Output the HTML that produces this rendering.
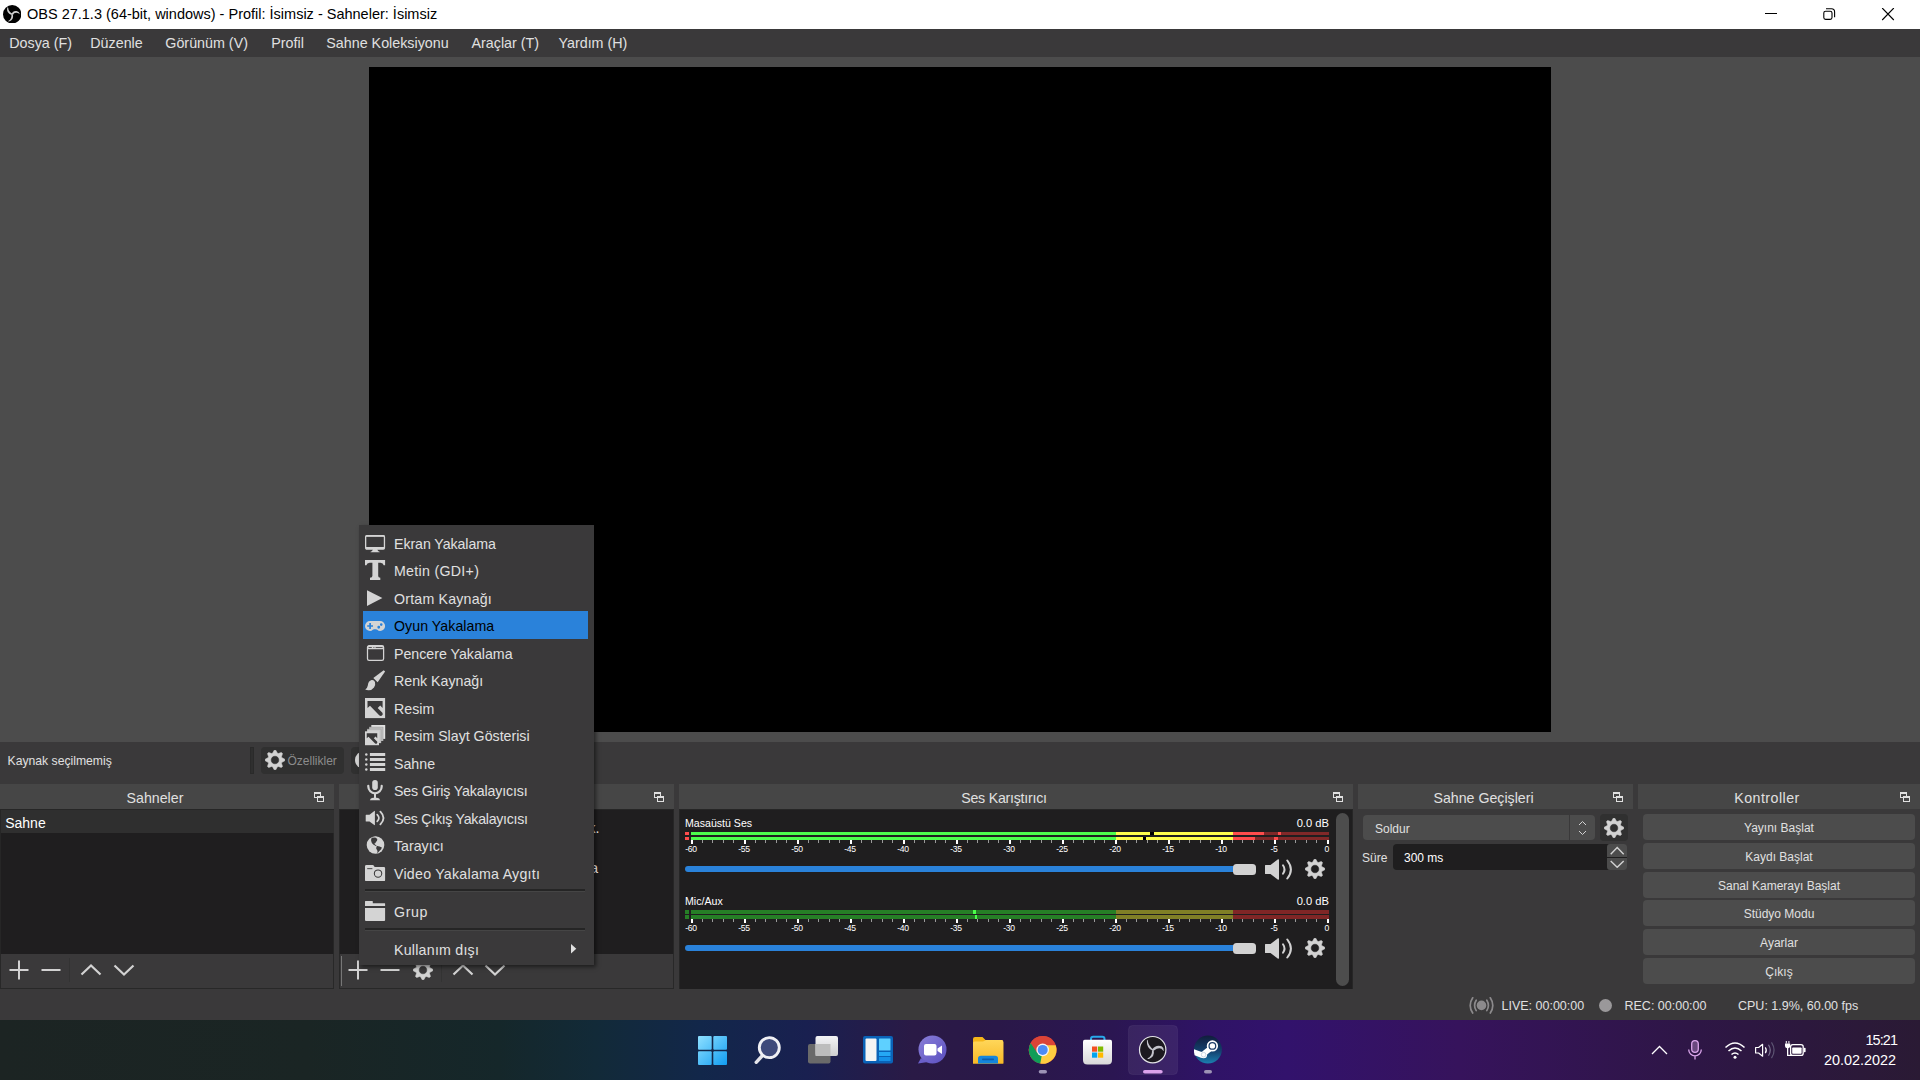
<!DOCTYPE html>
<html lang="tr"><head><meta charset="utf-8"><title>OBS</title>
<style>
*{box-sizing:border-box;margin:0;padding:0}
html,body{width:1920px;height:1080px;overflow:hidden;background:#3a393a;font-family:"Liberation Sans",sans-serif;color:#e0e0e0}
.abs{position:absolute}
div.abs{white-space:nowrap}
#titlebar{left:0;top:0;width:1920px;height:29px;background:#fff;color:#000;font-size:14.5px;line-height:29px}
#menubar{left:0;top:29px;width:1920px;height:28px;background:#3a393a;font-size:14.3px;line-height:28px}
#menubar span{position:absolute;top:0;white-space:nowrap}
#preview{left:0;top:57px;width:1920px;height:685px;background:#4c4c4c}
#canvas{left:369px;top:10px;width:1182px;height:665px;background:#000}
.dh{height:25px;top:784px;background:#464646;font-size:14.2px;line-height:28px;text-align:center}
.list{background:#1f1e1f;top:809px;border:1px solid #262626;border-bottom:none}
.tb{top:954px;height:35px;background:#3a393a;border-bottom:1px solid #282828;border-left:1px solid #282828;border-right:1px solid #282828}
.mx{font-size:10.6px;line-height:14px;color:#fff}
.tk{font-size:8.6px;line-height:9px;color:#fff;letter-spacing:-0.3px}
.btn{left:1643px;width:272px;height:26px;border-radius:4px;background:#4c4c4c;font-size:12px;line-height:26px;padding-top:1px;text-align:center}
.mi{font-size:14.2px;line-height:28px}
#ctx{left:359px;top:525px;width:235px;height:440px;background:#3a393a;box-shadow:2px 2px 4px rgba(0,0,0,.5)}
.st{top:998px;font-size:12.5px;line-height:16px}
#taskbar{left:0;top:1020px;width:1920px;height:60px;background:linear-gradient(90deg,#1c2423 0%,#1a2524 16%,#15272a 26%,#122a38 31%,#12274a 36.500%,#192050 42%,#2a1a46 47.500%,#2a1848 52%,#2b1652 58%,#2f1366 63%,#32126c 67%,#36135c 76%,#2e1646 88%,#2a1a34 100%)}
</style></head><body>
<div id="titlebar" class="abs"><span class="abs" style="left:27px;white-space:nowrap">OBS 27.1.3 (64-bit, windows) - Profil: İsimsiz - Sahneler: İsimsiz</span>
<svg class="abs" style="left:2.9px;top:4.6px" width="18.4" height="18.6" viewBox="0 0 18.4 18.6"><circle cx="9.2" cy="9.3" r="9.2" fill="#020202"/><g fill="#cfcfcf"><path d="M4.2,2.5Q3.1,8 8.5,10.1L9.7,8.8Q5.5,7 5.1,2.6Z"/><path d="M8.6,9Q10,5.500 13.6,6.100Q16.100,6.700 17,9.300Q15.400,7.900 13.400,7.700Q11,7.500 9.900,10Z"/><path d="M8.400,9.600L10,9.600Q10.900,15.400 6,16.500Q5.400,16.500 5.200,16Q8.800,14.600 8.400,9.600Z"/></g></svg>
<svg class="abs" style="left:1760px;top:8px" width="140" height="14" viewBox="0 0 140 14"><path d="M5,5.5H17" stroke="#000" stroke-width="1" fill="none"/><rect x="63.8" y="3.2" width="8.2" height="8.2" rx="1.8" fill="none" stroke="#000" stroke-width="1.1"/><path d="M66,0.8H71.5Q74.6,0.8 74.6,3.9V9.2" fill="none" stroke="#000" stroke-width="1.1"/><path d="M122.2,0L133.8,12M133.8,0L122.2,12" stroke="#000" stroke-width="1.1" fill="none"/></svg>
</div>
<div id="menubar" class="abs">
<span style="left:9.3px">Dosya (F)</span><span style="left:90.3px">Düzenle</span><span style="left:165.3px">Görünüm (V)</span><span style="left:271.3px">Profil</span><span style="left:326.3px">Sahne Koleksiyonu</span><span style="left:471.5px">Araçlar (T)</span><span style="left:558.5px">Yardım (H)</span>
</div>
<div id="preview" class="abs"><div id="canvas" class="abs"></div></div>

<!-- context bar -->
<div class="abs" style="left:7.5px;top:753px;font-size:12.2px;line-height:16px">Kaynak seçilmemiş</div>
<div class="abs" style="left:250px;top:747px;width:4px;height:27px;background:#2f2f2f;border:1px solid #2a2a2a"></div>
<div class="abs" style="left:261px;top:747px;width:83px;height:27px;border-radius:4px;background:#303030"></div>
<svg class="abs" style="left:265px;top:750px" width="20" height="20" viewBox="0 0 24 24"><path fill="#d2d2d2" fill-rule="evenodd" stroke="#d2d2d2" stroke-width="0.7" stroke-linejoin="round" d="M9.31,3.73 L11.07,0.24 L12.93,0.24 L14.69,3.73 L15.95,4.25 L19.66,3.03 L20.97,4.34 L19.75,8.05 L20.27,9.31 L23.76,11.07 L23.76,12.93 L20.27,14.69 L19.75,15.95 L20.97,19.66 L19.66,20.97 L15.95,19.75 L14.69,20.27 L12.93,23.76 L11.07,23.76 L9.31,20.27 L8.05,19.75 L4.34,20.97 L3.03,19.66 L4.25,15.95 L3.73,14.69 L0.24,12.93 L0.24,11.07 L3.73,9.31 L4.25,8.05 L3.03,4.34 L4.34,3.03 L8.05,4.25Z M17.15,12.00 A5.15,5.15 0 1,0 6.85,12.00 A5.15,5.15 0 1,0 17.15,12.00Z"/></svg>
<div class="abs" style="left:287.5px;top:753px;font-size:12px;line-height:16px;color:#8c8c8c">Özellikler</div>
<div class="abs" style="left:351px;top:747px;width:80px;height:27px;border-radius:4px;background:#303030"></div>
<div class="abs" style="left:355px;top:751px;width:18px;height:18px;border-radius:9px;background:#d2d2d2"></div>
<div class="abs" style="left:378px;top:753px;font-size:12px;line-height:16px;color:#8c8c8c">Filtreler</div>

<!-- Scenes dock -->
<div class="abs dh" style="left:0;width:334px"><span style="position:relative;left:-12px">Sahneler</span></div>
<svg class="abs" style="left:314px;top:792px" width="11" height="11" viewBox="0 0 11 11" shape-rendering="crispEdges"><rect x="0.5" y="0.5" width="6" height="5" fill="#464646" stroke="#e0e0e0"/><rect x="0" y="0" width="7" height="2" fill="#e0e0e0"/><rect x="3.5" y="4.5" width="6" height="5" fill="#464646" stroke="#e0e0e0"/><rect x="3" y="4" width="7" height="2" fill="#e0e0e0"/></svg>
<div class="abs list" style="left:0;width:334px;height:145px"></div>
<div class="abs" style="left:1px;top:810px;width:333px;height:23px;background:#2f2f2f"></div>
<div class="abs" style="left:5.2px;top:812px;font-size:14px;line-height:22px;color:#fff">Sahne</div>
<div class="abs tb" style="left:0;width:334px"></div>
<svg class="abs" style="left:9px;top:960px" width="20" height="20" viewBox="0 0 20 20"><path stroke="#d2d2d2" stroke-width="2" fill="none" d="M10,0.5V19.5M0.5,10H19.5"/></svg><svg class="abs" style="left:41px;top:960px" width="20" height="20" viewBox="0 0 20 20"><path stroke="#d2d2d2" stroke-width="2" fill="none" d="M0.5,10H19.5"/></svg><svg class="abs" style="left:80px;top:963px" width="22" height="14" viewBox="0 0 22 14"><path stroke="#d2d2d2" stroke-width="2.2" fill="none" stroke-linejoin="miter" d="M1.5,11.5 L11,2.5 L20.5,11.5"/></svg><svg class="abs" style="left:113px;top:963px" width="22" height="14" viewBox="0 0 22 14"><path stroke="#d2d2d2" stroke-width="2.2" fill="none" stroke-linejoin="miter" d="M1.5,2.5 L11,11.5 L20.5,2.5"/></svg>
<div class="abs" style="left:69px;top:958px;width:1px;height:24px;background:#333"></div>

<!-- Sources dock -->
<div class="abs dh" style="left:339px;width:335px"><span style="position:relative;left:-12px">Kaynaklar</span></div>
<svg class="abs" style="left:654px;top:792px" width="11" height="11" viewBox="0 0 11 11" shape-rendering="crispEdges"><rect x="0.5" y="0.5" width="6" height="5" fill="#464646" stroke="#e0e0e0"/><rect x="0" y="0" width="7" height="2" fill="#e0e0e0"/><rect x="3.5" y="4.5" width="6" height="5" fill="#464646" stroke="#e0e0e0"/><rect x="3" y="4" width="7" height="2" fill="#e0e0e0"/></svg>
<div class="abs list" style="left:339px;width:335px;height:145px"></div>
<div class="abs" style="left:400px;top:820.4px;font-size:14px;line-height:16px;color:#fff;width:199.5px;text-align:right">Hiç kaynağınız yok.</div>
<div class="abs" style="left:400px;top:860.3px;font-size:14px;line-height:16px;color:#fff;width:198px;text-align:right">veya buraya tıklaya</div>
<div class="abs tb" style="left:339px;width:335px"></div>
<div class="abs" style="left:341px;top:956px;width:1px;height:30px;background:#777"></div>
<svg class="abs" style="left:348px;top:960px" width="20" height="20" viewBox="0 0 20 20"><path stroke="#d2d2d2" stroke-width="2" fill="none" d="M10,0.5V19.5M0.5,10H19.5"/></svg><svg class="abs" style="left:380px;top:960px" width="20" height="20" viewBox="0 0 20 20"><path stroke="#d2d2d2" stroke-width="2" fill="none" d="M0.5,10H19.5"/></svg><svg class="abs" style="left:413px;top:960px" width="20" height="20" viewBox="0 0 24 24"><path fill="#d2d2d2" fill-rule="evenodd" stroke="#d2d2d2" stroke-width="0.7" stroke-linejoin="round" d="M9.31,3.73 L11.07,0.24 L12.93,0.24 L14.69,3.73 L15.95,4.25 L19.66,3.03 L20.97,4.34 L19.75,8.05 L20.27,9.31 L23.76,11.07 L23.76,12.93 L20.27,14.69 L19.75,15.95 L20.97,19.66 L19.66,20.97 L15.95,19.75 L14.69,20.27 L12.93,23.76 L11.07,23.76 L9.31,20.27 L8.05,19.75 L4.34,20.97 L3.03,19.66 L4.25,15.95 L3.73,14.69 L0.24,12.93 L0.24,11.07 L3.73,9.31 L4.25,8.05 L3.03,4.34 L4.34,3.03 L8.05,4.25Z M17.15,12.00 A5.15,5.15 0 1,0 6.85,12.00 A5.15,5.15 0 1,0 17.15,12.00Z"/></svg><svg class="abs" style="left:452px;top:963px" width="22" height="14" viewBox="0 0 22 14"><path stroke="#d2d2d2" stroke-width="2.2" fill="none" stroke-linejoin="miter" d="M1.5,11.5 L11,2.5 L20.5,11.5"/></svg><svg class="abs" style="left:484px;top:963px" width="22" height="14" viewBox="0 0 22 14"><path stroke="#d2d2d2" stroke-width="2.2" fill="none" stroke-linejoin="miter" d="M1.5,2.5 L11,11.5 L20.5,2.5"/></svg>
<div class="abs" style="left:441px;top:958px;width:1px;height:24px;background:#333"></div>

<!-- Mixer dock -->
<div class="abs dh" style="left:679px;width:674px"><span style="position:relative;left:-12px;letter-spacing:-0.24px">Ses Karıştırıcı</span></div>
<svg class="abs" style="left:1333px;top:792px" width="11" height="11" viewBox="0 0 11 11" shape-rendering="crispEdges"><rect x="0.5" y="0.5" width="6" height="5" fill="#464646" stroke="#e0e0e0"/><rect x="0" y="0" width="7" height="2" fill="#e0e0e0"/><rect x="3.5" y="4.5" width="6" height="5" fill="#464646" stroke="#e0e0e0"/><rect x="3" y="4" width="7" height="2" fill="#e0e0e0"/></svg>
<div class="abs list" style="left:679px;width:674px;height:180px"></div>
<div class="abs mx" style="left:685px;top:816px">Masaüstü Ses</div><div class="abs mx" style="left:1260px;width:69px;text-align:right;top:816px;font-size:11.2px">0.0 dB</div><div class="abs" style="left:685px;top:832px;width:4px;height:3px;background:#ff4c4c"></div><div class="abs" style="left:691px;top:832px;width:425px;height:3px;background:#4cff4c"></div><div class="abs" style="left:1116px;top:832px;width:117px;height:3px;background:#ffff4c"></div><div class="abs" style="left:1233px;top:832px;width:31px;height:3px;background:#ff4c4c"></div><div class="abs" style="left:1264px;top:832px;width:65px;height:3px;background:#802828"></div><div class="abs" style="left:1278px;top:832px;width:3px;height:3px;background:#ff4c4c"></div><div class="abs" style="left:1150px;top:832px;width:4px;height:3px;background:#000"></div><div class="abs" style="left:685px;top:837px;width:4px;height:3px;background:#ff4c4c"></div><div class="abs" style="left:691px;top:837px;width:425px;height:3px;background:#4cff4c"></div><div class="abs" style="left:1116px;top:837px;width:117px;height:3px;background:#ffff4c"></div><div class="abs" style="left:1233px;top:837px;width:22px;height:3px;background:#ff4c4c"></div><div class="abs" style="left:1255px;top:837px;width:74px;height:3px;background:#802828"></div><div class="abs" style="left:1274px;top:837px;width:4px;height:3px;background:#ff4c4c"></div><div class="abs" style="left:1143px;top:837px;width:3px;height:3px;background:#000"></div><div class="abs" style="left:691px;top:840px;width:2px;height:4px;background:#fff"></div><div class="abs tk" style="left:671px;top:845px;width:40px;text-align:center">-60</div><div class="abs" style="left:702px;top:840px;width:1px;height:3px;background:#9a9a9a"></div><div class="abs" style="left:712px;top:840px;width:1px;height:3px;background:#9a9a9a"></div><div class="abs" style="left:723px;top:840px;width:1px;height:3px;background:#9a9a9a"></div><div class="abs" style="left:733px;top:840px;width:1px;height:3px;background:#9a9a9a"></div><div class="abs" style="left:744px;top:840px;width:2px;height:4px;background:#fff"></div><div class="abs tk" style="left:724px;top:845px;width:40px;text-align:center">-55</div><div class="abs" style="left:755px;top:840px;width:1px;height:3px;background:#9a9a9a"></div><div class="abs" style="left:765px;top:840px;width:1px;height:3px;background:#9a9a9a"></div><div class="abs" style="left:776px;top:840px;width:1px;height:3px;background:#9a9a9a"></div><div class="abs" style="left:786px;top:840px;width:1px;height:3px;background:#9a9a9a"></div><div class="abs" style="left:797px;top:840px;width:2px;height:4px;background:#fff"></div><div class="abs tk" style="left:777px;top:845px;width:40px;text-align:center">-50</div><div class="abs" style="left:808px;top:840px;width:1px;height:3px;background:#9a9a9a"></div><div class="abs" style="left:818px;top:840px;width:1px;height:3px;background:#9a9a9a"></div><div class="abs" style="left:829px;top:840px;width:1px;height:3px;background:#9a9a9a"></div><div class="abs" style="left:839px;top:840px;width:1px;height:3px;background:#9a9a9a"></div><div class="abs" style="left:850px;top:840px;width:2px;height:4px;background:#fff"></div><div class="abs tk" style="left:830px;top:845px;width:40px;text-align:center">-45</div><div class="abs" style="left:861px;top:840px;width:1px;height:3px;background:#9a9a9a"></div><div class="abs" style="left:871px;top:840px;width:1px;height:3px;background:#9a9a9a"></div><div class="abs" style="left:882px;top:840px;width:1px;height:3px;background:#9a9a9a"></div><div class="abs" style="left:892px;top:840px;width:1px;height:3px;background:#9a9a9a"></div><div class="abs" style="left:903px;top:840px;width:2px;height:4px;background:#fff"></div><div class="abs tk" style="left:883px;top:845px;width:40px;text-align:center">-40</div><div class="abs" style="left:914px;top:840px;width:1px;height:3px;background:#9a9a9a"></div><div class="abs" style="left:924px;top:840px;width:1px;height:3px;background:#9a9a9a"></div><div class="abs" style="left:935px;top:840px;width:1px;height:3px;background:#9a9a9a"></div><div class="abs" style="left:945px;top:840px;width:1px;height:3px;background:#9a9a9a"></div><div class="abs" style="left:956px;top:840px;width:2px;height:4px;background:#fff"></div><div class="abs tk" style="left:936px;top:845px;width:40px;text-align:center">-35</div><div class="abs" style="left:967px;top:840px;width:1px;height:3px;background:#9a9a9a"></div><div class="abs" style="left:977px;top:840px;width:1px;height:3px;background:#9a9a9a"></div><div class="abs" style="left:988px;top:840px;width:1px;height:3px;background:#9a9a9a"></div><div class="abs" style="left:998px;top:840px;width:1px;height:3px;background:#9a9a9a"></div><div class="abs" style="left:1009px;top:840px;width:2px;height:4px;background:#fff"></div><div class="abs tk" style="left:989px;top:845px;width:40px;text-align:center">-30</div><div class="abs" style="left:1020px;top:840px;width:1px;height:3px;background:#9a9a9a"></div><div class="abs" style="left:1030px;top:840px;width:1px;height:3px;background:#9a9a9a"></div><div class="abs" style="left:1041px;top:840px;width:1px;height:3px;background:#9a9a9a"></div><div class="abs" style="left:1051px;top:840px;width:1px;height:3px;background:#9a9a9a"></div><div class="abs" style="left:1062px;top:840px;width:2px;height:4px;background:#fff"></div><div class="abs tk" style="left:1042px;top:845px;width:40px;text-align:center">-25</div><div class="abs" style="left:1073px;top:840px;width:1px;height:3px;background:#9a9a9a"></div><div class="abs" style="left:1083px;top:840px;width:1px;height:3px;background:#9a9a9a"></div><div class="abs" style="left:1094px;top:840px;width:1px;height:3px;background:#9a9a9a"></div><div class="abs" style="left:1104px;top:840px;width:1px;height:3px;background:#9a9a9a"></div><div class="abs" style="left:1115px;top:840px;width:2px;height:4px;background:#fff"></div><div class="abs tk" style="left:1095px;top:845px;width:40px;text-align:center">-20</div><div class="abs" style="left:1126px;top:840px;width:1px;height:3px;background:#9a9a9a"></div><div class="abs" style="left:1136px;top:840px;width:1px;height:3px;background:#9a9a9a"></div><div class="abs" style="left:1147px;top:840px;width:1px;height:3px;background:#9a9a9a"></div><div class="abs" style="left:1157px;top:840px;width:1px;height:3px;background:#9a9a9a"></div><div class="abs" style="left:1168px;top:840px;width:2px;height:4px;background:#fff"></div><div class="abs tk" style="left:1148px;top:845px;width:40px;text-align:center">-15</div><div class="abs" style="left:1179px;top:840px;width:1px;height:3px;background:#9a9a9a"></div><div class="abs" style="left:1189px;top:840px;width:1px;height:3px;background:#9a9a9a"></div><div class="abs" style="left:1200px;top:840px;width:1px;height:3px;background:#9a9a9a"></div><div class="abs" style="left:1210px;top:840px;width:1px;height:3px;background:#9a9a9a"></div><div class="abs" style="left:1221px;top:840px;width:2px;height:4px;background:#fff"></div><div class="abs tk" style="left:1201px;top:845px;width:40px;text-align:center">-10</div><div class="abs" style="left:1232px;top:840px;width:1px;height:3px;background:#9a9a9a"></div><div class="abs" style="left:1242px;top:840px;width:1px;height:3px;background:#9a9a9a"></div><div class="abs" style="left:1253px;top:840px;width:1px;height:3px;background:#9a9a9a"></div><div class="abs" style="left:1263px;top:840px;width:1px;height:3px;background:#9a9a9a"></div><div class="abs" style="left:1274px;top:840px;width:2px;height:4px;background:#fff"></div><div class="abs tk" style="left:1254px;top:845px;width:40px;text-align:center">-5</div><div class="abs" style="left:1285px;top:840px;width:1px;height:3px;background:#9a9a9a"></div><div class="abs" style="left:1295px;top:840px;width:1px;height:3px;background:#9a9a9a"></div><div class="abs" style="left:1306px;top:840px;width:1px;height:3px;background:#9a9a9a"></div><div class="abs" style="left:1316px;top:840px;width:1px;height:3px;background:#9a9a9a"></div><div class="abs" style="left:1327px;top:840px;width:2px;height:4px;background:#fff"></div><div class="abs tk" style="left:1299px;top:845px;width:30px;text-align:right">0</div><div class="abs" style="left:685px;top:866px;width:560px;height:6px;border-radius:3px;background:#2a82da"></div><div class="abs" style="left:1233px;top:864px;width:23px;height:11px;border-radius:3.5px;background:#d2d2d2"></div><svg class="abs" style="left:1265px;top:859px" width="28" height="21" viewBox="0 0 28 21"><path fill="#d2d2d2" d="M0.5,6 H5.5 L13,0.3 Q14,0 14,1 V20 Q14,21 13,20.7 L5.5,15 H0.5 Q0,15 0,14.5 V6.5 Q0,6 0.5,6Z"/><path fill="none" stroke="#d2d2d2" stroke-width="2" stroke-linecap="round" d="M18,6.2 Q21,10.5 18,14.8"/><path fill="none" stroke="#d2d2d2" stroke-width="2" stroke-linecap="round" d="M22.3,1.5 Q29.5,10.5 22.3,19.5"/></svg><svg class="abs" style="left:1305px;top:859px" width="20" height="20" viewBox="0 0 24 24"><path fill="#d2d2d2" fill-rule="evenodd" stroke="#d2d2d2" stroke-width="0.7" stroke-linejoin="round" d="M9.31,3.73 L11.07,0.24 L12.93,0.24 L14.69,3.73 L15.95,4.25 L19.66,3.03 L20.97,4.34 L19.75,8.05 L20.27,9.31 L23.76,11.07 L23.76,12.93 L20.27,14.69 L19.75,15.95 L20.97,19.66 L19.66,20.97 L15.95,19.75 L14.69,20.27 L12.93,23.76 L11.07,23.76 L9.31,20.27 L8.05,19.75 L4.34,20.97 L3.03,19.66 L4.25,15.95 L3.73,14.69 L0.24,12.93 L0.24,11.07 L3.73,9.31 L4.25,8.05 L3.03,4.34 L4.34,3.03 L8.05,4.25Z M17.15,12.00 A5.15,5.15 0 1,0 6.85,12.00 A5.15,5.15 0 1,0 17.15,12.00Z"/></svg>
<div class="abs mx" style="left:685px;top:894px">Mic/Aux</div><div class="abs mx" style="left:1260px;width:69px;text-align:right;top:894px;font-size:11.2px">0.0 dB</div><div class="abs" style="left:685px;top:910px;width:4px;height:4px;background:#267f26"></div><div class="abs" style="left:691px;top:910px;width:425px;height:4px;background:#267f26"></div><div class="abs" style="left:1116px;top:910px;width:117px;height:4px;background:#7f7f26"></div><div class="abs" style="left:1233px;top:910px;width:96px;height:4px;background:#7f2626"></div><div class="abs" style="left:973px;top:910px;width:3px;height:4px;background:#4cff4c"></div><div class="abs" style="left:685px;top:915px;width:4px;height:4px;background:#267f26"></div><div class="abs" style="left:691px;top:915px;width:425px;height:4px;background:#267f26"></div><div class="abs" style="left:1116px;top:915px;width:117px;height:4px;background:#7f7f26"></div><div class="abs" style="left:1233px;top:915px;width:96px;height:4px;background:#7f2626"></div><div class="abs" style="left:975px;top:915px;width:2px;height:4px;background:#4cff4c"></div><div class="abs" style="left:691px;top:919px;width:2px;height:4px;background:#fff"></div><div class="abs tk" style="left:671px;top:924px;width:40px;text-align:center">-60</div><div class="abs" style="left:702px;top:919px;width:1px;height:3px;background:#9a9a9a"></div><div class="abs" style="left:712px;top:919px;width:1px;height:3px;background:#9a9a9a"></div><div class="abs" style="left:723px;top:919px;width:1px;height:3px;background:#9a9a9a"></div><div class="abs" style="left:733px;top:919px;width:1px;height:3px;background:#9a9a9a"></div><div class="abs" style="left:744px;top:919px;width:2px;height:4px;background:#fff"></div><div class="abs tk" style="left:724px;top:924px;width:40px;text-align:center">-55</div><div class="abs" style="left:755px;top:919px;width:1px;height:3px;background:#9a9a9a"></div><div class="abs" style="left:765px;top:919px;width:1px;height:3px;background:#9a9a9a"></div><div class="abs" style="left:776px;top:919px;width:1px;height:3px;background:#9a9a9a"></div><div class="abs" style="left:786px;top:919px;width:1px;height:3px;background:#9a9a9a"></div><div class="abs" style="left:797px;top:919px;width:2px;height:4px;background:#fff"></div><div class="abs tk" style="left:777px;top:924px;width:40px;text-align:center">-50</div><div class="abs" style="left:808px;top:919px;width:1px;height:3px;background:#9a9a9a"></div><div class="abs" style="left:818px;top:919px;width:1px;height:3px;background:#9a9a9a"></div><div class="abs" style="left:829px;top:919px;width:1px;height:3px;background:#9a9a9a"></div><div class="abs" style="left:839px;top:919px;width:1px;height:3px;background:#9a9a9a"></div><div class="abs" style="left:850px;top:919px;width:2px;height:4px;background:#fff"></div><div class="abs tk" style="left:830px;top:924px;width:40px;text-align:center">-45</div><div class="abs" style="left:861px;top:919px;width:1px;height:3px;background:#9a9a9a"></div><div class="abs" style="left:871px;top:919px;width:1px;height:3px;background:#9a9a9a"></div><div class="abs" style="left:882px;top:919px;width:1px;height:3px;background:#9a9a9a"></div><div class="abs" style="left:892px;top:919px;width:1px;height:3px;background:#9a9a9a"></div><div class="abs" style="left:903px;top:919px;width:2px;height:4px;background:#fff"></div><div class="abs tk" style="left:883px;top:924px;width:40px;text-align:center">-40</div><div class="abs" style="left:914px;top:919px;width:1px;height:3px;background:#9a9a9a"></div><div class="abs" style="left:924px;top:919px;width:1px;height:3px;background:#9a9a9a"></div><div class="abs" style="left:935px;top:919px;width:1px;height:3px;background:#9a9a9a"></div><div class="abs" style="left:945px;top:919px;width:1px;height:3px;background:#9a9a9a"></div><div class="abs" style="left:956px;top:919px;width:2px;height:4px;background:#fff"></div><div class="abs tk" style="left:936px;top:924px;width:40px;text-align:center">-35</div><div class="abs" style="left:967px;top:919px;width:1px;height:3px;background:#9a9a9a"></div><div class="abs" style="left:977px;top:919px;width:1px;height:3px;background:#9a9a9a"></div><div class="abs" style="left:988px;top:919px;width:1px;height:3px;background:#9a9a9a"></div><div class="abs" style="left:998px;top:919px;width:1px;height:3px;background:#9a9a9a"></div><div class="abs" style="left:1009px;top:919px;width:2px;height:4px;background:#fff"></div><div class="abs tk" style="left:989px;top:924px;width:40px;text-align:center">-30</div><div class="abs" style="left:1020px;top:919px;width:1px;height:3px;background:#9a9a9a"></div><div class="abs" style="left:1030px;top:919px;width:1px;height:3px;background:#9a9a9a"></div><div class="abs" style="left:1041px;top:919px;width:1px;height:3px;background:#9a9a9a"></div><div class="abs" style="left:1051px;top:919px;width:1px;height:3px;background:#9a9a9a"></div><div class="abs" style="left:1062px;top:919px;width:2px;height:4px;background:#fff"></div><div class="abs tk" style="left:1042px;top:924px;width:40px;text-align:center">-25</div><div class="abs" style="left:1073px;top:919px;width:1px;height:3px;background:#9a9a9a"></div><div class="abs" style="left:1083px;top:919px;width:1px;height:3px;background:#9a9a9a"></div><div class="abs" style="left:1094px;top:919px;width:1px;height:3px;background:#9a9a9a"></div><div class="abs" style="left:1104px;top:919px;width:1px;height:3px;background:#9a9a9a"></div><div class="abs" style="left:1115px;top:919px;width:2px;height:4px;background:#fff"></div><div class="abs tk" style="left:1095px;top:924px;width:40px;text-align:center">-20</div><div class="abs" style="left:1126px;top:919px;width:1px;height:3px;background:#9a9a9a"></div><div class="abs" style="left:1136px;top:919px;width:1px;height:3px;background:#9a9a9a"></div><div class="abs" style="left:1147px;top:919px;width:1px;height:3px;background:#9a9a9a"></div><div class="abs" style="left:1157px;top:919px;width:1px;height:3px;background:#9a9a9a"></div><div class="abs" style="left:1168px;top:919px;width:2px;height:4px;background:#fff"></div><div class="abs tk" style="left:1148px;top:924px;width:40px;text-align:center">-15</div><div class="abs" style="left:1179px;top:919px;width:1px;height:3px;background:#9a9a9a"></div><div class="abs" style="left:1189px;top:919px;width:1px;height:3px;background:#9a9a9a"></div><div class="abs" style="left:1200px;top:919px;width:1px;height:3px;background:#9a9a9a"></div><div class="abs" style="left:1210px;top:919px;width:1px;height:3px;background:#9a9a9a"></div><div class="abs" style="left:1221px;top:919px;width:2px;height:4px;background:#fff"></div><div class="abs tk" style="left:1201px;top:924px;width:40px;text-align:center">-10</div><div class="abs" style="left:1232px;top:919px;width:1px;height:3px;background:#9a9a9a"></div><div class="abs" style="left:1242px;top:919px;width:1px;height:3px;background:#9a9a9a"></div><div class="abs" style="left:1253px;top:919px;width:1px;height:3px;background:#9a9a9a"></div><div class="abs" style="left:1263px;top:919px;width:1px;height:3px;background:#9a9a9a"></div><div class="abs" style="left:1274px;top:919px;width:2px;height:4px;background:#fff"></div><div class="abs tk" style="left:1254px;top:924px;width:40px;text-align:center">-5</div><div class="abs" style="left:1285px;top:919px;width:1px;height:3px;background:#9a9a9a"></div><div class="abs" style="left:1295px;top:919px;width:1px;height:3px;background:#9a9a9a"></div><div class="abs" style="left:1306px;top:919px;width:1px;height:3px;background:#9a9a9a"></div><div class="abs" style="left:1316px;top:919px;width:1px;height:3px;background:#9a9a9a"></div><div class="abs" style="left:1327px;top:919px;width:2px;height:4px;background:#fff"></div><div class="abs tk" style="left:1299px;top:924px;width:30px;text-align:right">0</div><div class="abs" style="left:685px;top:945px;width:560px;height:6px;border-radius:3px;background:#2a82da"></div><div class="abs" style="left:1233px;top:943px;width:23px;height:11px;border-radius:3.5px;background:#d2d2d2"></div><svg class="abs" style="left:1265px;top:938px" width="28" height="21" viewBox="0 0 28 21"><path fill="#d2d2d2" d="M0.5,6 H5.5 L13,0.3 Q14,0 14,1 V20 Q14,21 13,20.7 L5.5,15 H0.5 Q0,15 0,14.5 V6.5 Q0,6 0.5,6Z"/><path fill="none" stroke="#d2d2d2" stroke-width="2" stroke-linecap="round" d="M18,6.2 Q21,10.5 18,14.8"/><path fill="none" stroke="#d2d2d2" stroke-width="2" stroke-linecap="round" d="M22.3,1.5 Q29.5,10.5 22.3,19.5"/></svg><svg class="abs" style="left:1305px;top:938px" width="20" height="20" viewBox="0 0 24 24"><path fill="#d2d2d2" fill-rule="evenodd" stroke="#d2d2d2" stroke-width="0.7" stroke-linejoin="round" d="M9.31,3.73 L11.07,0.24 L12.93,0.24 L14.69,3.73 L15.95,4.25 L19.66,3.03 L20.97,4.34 L19.75,8.05 L20.27,9.31 L23.76,11.07 L23.76,12.93 L20.27,14.69 L19.75,15.95 L20.97,19.66 L19.66,20.97 L15.95,19.75 L14.69,20.27 L12.93,23.76 L11.07,23.76 L9.31,20.27 L8.05,19.75 L4.34,20.97 L3.03,19.66 L4.25,15.95 L3.73,14.69 L0.24,12.93 L0.24,11.07 L3.73,9.31 L4.25,8.05 L3.03,4.34 L4.34,3.03 L8.05,4.25Z M17.15,12.00 A5.15,5.15 0 1,0 6.85,12.00 A5.15,5.15 0 1,0 17.15,12.00Z"/></svg>
<div class="abs" style="left:1336px;top:812.7px;width:13px;height:173px;border-radius:6.5px;background:#4d4d4d"></div>

<!-- Transitions dock -->
<div class="abs dh" style="left:1358px;width:275px"><span style="position:relative;left:-12px">Sahne Geçişleri</span></div>
<svg class="abs" style="left:1613px;top:792px" width="11" height="11" viewBox="0 0 11 11" shape-rendering="crispEdges"><rect x="0.5" y="0.5" width="6" height="5" fill="#464646" stroke="#e0e0e0"/><rect x="0" y="0" width="7" height="2" fill="#e0e0e0"/><rect x="3.5" y="4.5" width="6" height="5" fill="#464646" stroke="#e0e0e0"/><rect x="3" y="4" width="7" height="2" fill="#e0e0e0"/></svg>
<div class="abs" style="left:1363px;top:815px;width:232px;height:25px;border-radius:4px;background:#4c4c4c"></div>
<div class="abs" style="left:1569px;top:815px;width:1px;height:25px;background:#3a393a"></div>
<div class="abs" style="left:1375px;top:821px;font-size:12px;line-height:16px">Soldur</div>
<svg class="abs" style="left:1578px;top:820px" width="9" height="16" viewBox="0 0 9 16"><path fill="none" stroke="#d2d2d2" stroke-width="1" d="M1,5L4.5,1.5L8,5M1,11L4.5,14.5L8,11"/></svg>
<div class="abs" style="left:1600px;top:814px;width:28px;height:27px;border-radius:4px;background:#303030"></div>
<svg class="abs" style="left:1604px;top:818px" width="20" height="20" viewBox="0 0 24 24"><path fill="#d2d2d2" fill-rule="evenodd" stroke="#d2d2d2" stroke-width="0.7" stroke-linejoin="round" d="M9.31,3.73 L11.07,0.24 L12.93,0.24 L14.69,3.73 L15.95,4.25 L19.66,3.03 L20.97,4.34 L19.75,8.05 L20.27,9.31 L23.76,11.07 L23.76,12.93 L20.27,14.69 L19.75,15.95 L20.97,19.66 L19.66,20.97 L15.95,19.75 L14.69,20.27 L12.93,23.76 L11.07,23.76 L9.31,20.27 L8.05,19.75 L4.34,20.97 L3.03,19.66 L4.25,15.95 L3.73,14.69 L0.24,12.93 L0.24,11.07 L3.73,9.31 L4.25,8.05 L3.03,4.34 L4.34,3.03 L8.05,4.25Z M17.15,12.00 A5.15,5.15 0 1,0 6.85,12.00 A5.15,5.15 0 1,0 17.15,12.00Z"/></svg>
<div class="abs" style="left:1362px;top:850px;font-size:12px;line-height:16px">Süre</div>
<div class="abs" style="left:1393px;top:844px;width:234px;height:26px;border-radius:4px;background:#1f1e1f"></div>
<div class="abs" style="left:1404px;top:850px;font-size:12px;line-height:16px;color:#fff">300 ms</div>
<div class="abs" style="left:1607px;top:844px;width:20px;height:13px;border-radius:3px 3px 0 0;background:#4c4c4c"></div>
<div class="abs" style="left:1607px;top:858px;width:20px;height:12px;border-radius:0 0 3px 3px;background:#4c4c4c"></div>
<svg class="abs" style="left:1609px;top:846px" width="16" height="22" viewBox="0 0 16 22"><path fill="none" stroke="#d2d2d2" stroke-width="1.4" d="M1.7,8.2L8.2,1.6L14.7,8.2M1.7,15L8.2,21.3L14.7,15"/></svg>

<!-- Controls dock -->
<div class="abs dh" style="left:1638px;width:282px"><span style="position:relative;left:-12px;letter-spacing:0.49px">Kontroller</span></div>
<svg class="abs" style="left:1900px;top:792px" width="11" height="11" viewBox="0 0 11 11" shape-rendering="crispEdges"><rect x="0.5" y="0.5" width="6" height="5" fill="#464646" stroke="#e0e0e0"/><rect x="0" y="0" width="7" height="2" fill="#e0e0e0"/><rect x="3.5" y="4.5" width="6" height="5" fill="#464646" stroke="#e0e0e0"/><rect x="3" y="4" width="7" height="2" fill="#e0e0e0"/></svg>
<div class="abs btn" style="top:814px">Yayını Başlat</div>
<div class="abs btn" style="top:843px">Kaydı Başlat</div>
<div class="abs btn" style="top:872px">Sanal Kamerayı Başlat</div>
<div class="abs btn" style="top:900px">Stüdyo Modu</div>
<div class="abs btn" style="top:929px">Ayarlar</div>
<div class="abs btn" style="top:958px">Çıkış</div>

<!-- status bar -->
<svg class="abs" style="left:1468px;top:996px" width="27" height="19" viewBox="0 0 27 19"><circle cx="13.5" cy="9.4" r="4.8" fill="#8c8a8c"/><path fill="none" stroke="#8c8a8c" stroke-width="1.7" stroke-linecap="round" d="M8.2,4.2Q5,9.4 8.2,14.6M18.8,4.2Q22,9.4 18.8,14.600M4.700,1.800Q-0.300,9.400 4.700,17M22.300,1.800Q27.300,9.400 22.300,17"/></svg>
<div class="abs st" style="left:1501.5px">LIVE: 00:00:00</div>
<div class="abs" style="left:1598.8px;top:998.8px;width:13.2px;height:13.2px;border-radius:7px;background:#9a989a"></div>
<div class="abs st" style="left:1624.5px">REC: 00:00:00</div>
<div class="abs st" style="left:1738px">CPU: 1.9%, 60.00 fps</div>

<div id="ctx" class="abs"><svg class="abs" style="left:6px;top:10px" width="21" height="18" viewBox="0 0 21 18"><rect x="0.65" y="0.75" width="18.8" height="13.3" rx="1.2" fill="none" stroke="#d4d4d4" stroke-width="1.3"/><rect x="0.65" y="12" width="18.8" height="2.1" fill="#d4d4d4"/><rect x="0.4" y="0.3" width="19.3" height="1.4" rx="0.7" fill="#d4d4d4"/><path fill="#d4d4d4" d="M8,14H12.2L12.8,15.6Q13.2,16.4 14.6,16.7Q15,17.3 14.2,17.3H6Q5.2,17.3 5.6,16.7Q7,16.4 7.4,15.6Z"/></svg><div class="abs mi" style="left:35px;top:5px;color:#e0e0e0;letter-spacing:-0.07px">Ekran Yakalama</div><svg class="abs" style="left:6px;top:35px" width="21" height="21" viewBox="0 0 21 21"><path fill="#d4d4d4" d="M0,0H20.1V5.3H18.7Q18.2,2.7 15.5,2.7H13.2V16Q13.2,17.6 15.3,17.7V20.1H5V17.7Q7.4,17.6 7.4,16V2.7H4.6Q1.9,2.7 1.4,5.3H0Z"/></svg><div class="abs mi" style="left:35px;top:32px;color:#e0e0e0;letter-spacing:0.3px">Metin (GDI+)</div><svg class="abs" style="left:6px;top:63px" width="21" height="21" viewBox="0 0 21 21"><path fill="#d4d4d4" d="M2,2.3L17.4,10L2,17.9Z"/></svg><div class="abs mi" style="left:35px;top:60px;color:#e0e0e0;letter-spacing:0.2px">Ortam Kaynağı</div><div class="abs" style="left:4px;top:86px;width:225px;height:28px;background:#2a82da"></div><svg class="abs" style="left:6px;top:91px" width="21" height="21" viewBox="0 0 21 21"><path fill="#d4d4d4" fill-rule="evenodd" d="M5,5H15.1A5,5.05 0 0 1 15.1,15.1Q13.4,15.1 12.3,13.8Q11.8,13.3 11,13.3H9.1Q8.3,13.3 7.8,13.8Q6.7,15.1 5,15.1A5,5.05 0 0 1 5,5Z M4.25,7.1V9.15H2.2V10.85H4.25V12.9H5.95V10.85H8V9.15H5.95V7.1Z M16.25,7.3A1.3,1.3 0 1 0 16.25,9.9A1.3,1.3 0 1 0 16.25,7.3Z M13.75,9.85A1.4,1.4 0 1 0 13.75,12.65A1.4,1.4 0 1 0 13.75,9.85Z"/></svg><div class="abs mi" style="left:35px;top:87px;color:#000;letter-spacing:0.05px">Oyun Yakalama</div><svg class="abs" style="left:6px;top:118px" width="21" height="21" viewBox="0 0 21 21"><rect x="2.5" y="2.7" width="16.1" height="14.7" rx="1.6" fill="none" stroke="#d4d4d4" stroke-width="1.25"/><rect x="2.5" y="2.7" width="16.1" height="3.6" rx="1" fill="#d4d4d4"/><path d="M3.6,4.5H6.8M8.4,4.5H9.4M10.6,4.5H17.6" stroke="#3a393a" stroke-width="0.9" fill="none" opacity="0.9"/></svg><div class="abs mi" style="left:35px;top:115px;color:#e0e0e0;letter-spacing:0px">Pencere Yakalama</div><svg class="abs" style="left:6px;top:145px" width="21" height="21" viewBox="0 0 21 21"><path fill="#d4d4d4" d="M18.7,0.2L20.1,1.6L12.6,12.3L8.3,7.9Z"/><path fill="#d4d4d4" d="M6.6,10Q9,9.6 10,12Q10.8,15 9,17.5Q7,20.3 3.5,20.2Q1.5,20.2 0.2,19.6Q2.5,18 2.8,15.5Q3.2,10.8 6.6,10Z"/></svg><div class="abs mi" style="left:35px;top:142px;color:#e0e0e0;letter-spacing:0px">Renk Kaynağı</div><svg class="abs" style="left:6px;top:173px" width="21" height="21" viewBox="0 0 21 21"><rect x="0" y="0" width="20.1" height="20.1" fill="#d4d4d4"/><path fill="#3a393a" d="M2.5,2.9H17.6V9.9L15.2,7.6L12.7,10.1L17.4,14.8Q18.4,16.6 17,17.6Q15.6,18.4 14.2,17.2L5,7.7L2.5,9.9Z"/></svg><div class="abs mi" style="left:35px;top:170px;color:#e0e0e0;letter-spacing:0px">Resim</div><svg class="abs" style="left:6px;top:200px" width="21" height="21" viewBox="0 0 21 21"><rect x="6.3" y="0" width="13.9" height="13.9" fill="#e0e0e0"/><rect x="4.2" y="2.1" width="13.9" height="13.9" fill="#bdbdbd"/><rect x="2.1" y="4.2" width="13.9" height="13.9" fill="#cccccc"/><path d="M4.2,2.1H18.1V16M2.1,4.2H16V18.1" fill="none" stroke="#9a9a9a" stroke-width="0.5"/><rect x="0" y="6.3" width="14" height="13.9" fill="#d4d4d4"/><path fill="#3a393a" transform="translate(0,6.3) scale(0.695)" d="M2.5,2.9H17.6V9.9L15.2,7.6L12.7,10.1L17.4,14.8Q18.4,16.6 17,17.6Q15.6,18.4 14.2,17.2L5,7.7L2.5,9.9Z"/></svg><div class="abs mi" style="left:35px;top:197px;color:#e0e0e0;letter-spacing:0.0px">Resim Slayt Gösterisi</div><svg class="abs" style="left:6px;top:228px" width="21" height="19" viewBox="0 0 21 19"><path fill="#d4d4d4" d="M4.9,0H20.2V2.9H4.9Z M4.9,5H20.2V7.9H4.9Z M4.9,10H20.2V12.9H4.9Z M4.9,15H20.2V17.9H4.9Z"/><circle cx="1.3" cy="1.45" r="1.25" fill="#d4d4d4"/><circle cx="1.3" cy="6.45" r="1.25" fill="#d4d4d4"/><circle cx="1.3" cy="11.45" r="1.25" fill="#d4d4d4"/><circle cx="1.3" cy="16.45" r="1.25" fill="#d4d4d4"/></svg><div class="abs mi" style="left:35px;top:225px;color:#e0e0e0;letter-spacing:0px">Sahne</div><svg class="abs" style="left:6px;top:255px" width="21" height="21" viewBox="0 0 21 21"><rect x="7.2" y="0" width="5.6" height="10.1" rx="2.8" fill="#d4d4d4"/><path fill="none" stroke="#d4d4d4" stroke-width="2.2" stroke-linecap="round" d="M3.3,5.8V6.6A6.7,6.7 0 0 0 16.7,6.6V5.8"/><path fill="none" stroke="#d4d4d4" stroke-width="2" d="M10,13V18.5"/><path fill="#d4d4d4" d="M4.9,20.2Q5.2,18.1 8,17.8H12Q14.8,18.1 15.1,20.2Z"/></svg><div class="abs mi" style="left:35px;top:252px;color:#e0e0e0;letter-spacing:-0.14px">Ses Giriş Yakalayıcısı</div><svg class="abs" style="left:6px;top:283px" width="21" height="21" viewBox="0 0 21 21"><path fill="#d4d4d4" d="M1.2,6.8H4.5L9.3,2.9Q9.9,2.6 9.9,3.3V16.7Q9.9,17.4 9.3,17.1L4.5,13.4H1.2Q0.7,13.4 0.7,12.9V7.3Q0.7,6.8 1.2,6.8Z"/><path fill="none" stroke="#d4d4d4" stroke-width="1.7" stroke-linecap="round" d="M12.2,6.7Q15.6,10.05 12.2,13.4"/><path fill="none" stroke="#d4d4d4" stroke-width="1.8" stroke-linecap="round" d="M15.4,3.7Q21.6,10.05 15.4,16.4"/></svg><div class="abs mi" style="left:35px;top:280px;color:#e0e0e0;letter-spacing:-0.28px">Ses Çıkış Yakalayıcısı</div><svg class="abs" style="left:6px;top:310px" width="21" height="21" viewBox="0 0 21 21"><circle cx="10.5" cy="10" r="8.8" fill="#d4d4d4"/><path fill="#3a393a" d="M6.8,2.8Q8.5,1.9 10.5,2.2L12.3,4Q12.4,6 11,7Q10.4,8.6 9.2,8.8L11.6,10.8L11.2,11.2L8.2,9.4Q6.4,8 6.1,5.8Q6,4 6.8,2.8Z M12,10.9Q14.5,10.8 16.9,12.6Q16.6,14.6 14.6,15.8L12.7,18L12.3,17.8Q12.8,15.2 11.2,13.4Q11.2,11.6 12,10.9Z"/><path fill="#d4d4d4" opacity="0.55" d="M7.2,2.6Q9,1.4 11.5,1.6L12.4,3.6Q10,2.6 7.2,2.6Z"/></svg><div class="abs mi" style="left:35px;top:307px;color:#e0e0e0;letter-spacing:0px">Tarayıcı</div><svg class="abs" style="left:6px;top:338px" width="21" height="21" viewBox="0 0 21 21"><path fill="#d4d4d4" d="M0,3.4Q0,2 1.4,2H7.6Q8.4,2 8.9,2.8L9.6,3.9H18.9Q20.1,3.9 20.1,5.100V16.9Q20.1,18.1 18.9,18.1H1.2Q0,18.1 0,16.9Z"/><circle cx="13.05" cy="10.6" r="3.7" fill="none" stroke="#3a393a" stroke-width="1.05"/><path d="M2.6,5.65H7" stroke="#3a393a" stroke-width="0.9" stroke-linecap="round"/></svg><div class="abs mi" style="left:35px;top:335px;color:#e0e0e0;letter-spacing:0.25px">Video Yakalama Aygıtı</div><div class="abs" style="left:6px;top:364px;width:220px;height:3px;background:#252525;border-bottom:1px solid #454545"></div><svg class="abs" style="left:6px;top:376px" width="21" height="21" viewBox="0 0 21 21"><path fill="#d4d4d4" d="M0,0.4Q0,0 0.4,0H7.4Q7.8,0 7.8,0.4V2.2H19.7Q20.1,2.2 20.1,2.6V5H0Z M0,7H20.1V19Q20.1,20 19.1,20H1Q0,20 0,19Z"/></svg><div class="abs mi" style="left:35px;top:373px;letter-spacing:0.6px">Grup</div><div class="abs" style="left:6px;top:403px;width:220px;height:3px;background:#252525;border-bottom:1px solid #454545"></div><div class="abs mi" style="left:35px;top:411px;letter-spacing:0.24px">Kullanım dışı</div><svg class="abs" style="left:211px;top:418px" width="8" height="12" viewBox="0 0 8 12"><path fill="#e0e0e0" d="M1,1L6.3,5.7L1,10.4Z"/></svg></div>


<div id="taskbar" class="abs">
<svg class="abs" style="left:680px;top:0" width="560" height="60" viewBox="680 1020 560 60">
<defs>
<linearGradient id="gw" gradientUnits="userSpaceOnUse" x1="698" y1="1036" x2="727" y2="1065"><stop offset="0" stop-color="#8fe0ff"/><stop offset="1" stop-color="#119df2"/></linearGradient>
<linearGradient id="gf" x1="0" y1="0" x2="0" y2="1"><stop offset="0" stop-color="#ffd75a"/><stop offset="1" stop-color="#f7b928"/></linearGradient>
<linearGradient id="gs" x1="0" y1="0" x2="0" y2="1"><stop offset="0" stop-color="#111d3c"/><stop offset="0.55" stop-color="#14406e"/><stop offset="1" stop-color="#1b7fb0"/></linearGradient>
<linearGradient id="gc" x1="0" y1="0" x2="1" y2="1"><stop offset="0" stop-color="#8a7fd8"/><stop offset="1" stop-color="#5a4fc0"/></linearGradient>
<linearGradient id="gt" x1="0" y1="0" x2="0" y2="1"><stop offset="0" stop-color="#ffffff"/><stop offset="1" stop-color="#d8d8d8"/></linearGradient>
</defs>
<!-- windows -->
<rect x="698" y="1036" width="13.7" height="13.7" rx="1" fill="url(#gw)"/><rect x="713.3" y="1036" width="13.7" height="13.7" rx="1" fill="url(#gw)"/><rect x="698" y="1051.3" width="13.7" height="13.7" rx="1" fill="url(#gw)"/><rect x="713.3" y="1051.3" width="13.7" height="13.7" rx="1" fill="url(#gw)"/>
<!-- search -->
<path d="M762.5,1055.5L756.200,1062.300" stroke="#e4e4ea" stroke-width="3.400" stroke-linecap="round" fill="none"/>
<circle cx="769.300" cy="1047.600" r="10" fill="#3f4a7a" stroke="#f0f0f4" stroke-width="2.900"/>
<!-- task view -->
<rect x="808" y="1044" width="22.5" height="19.5" rx="2" fill="#6a6a6a"/>
<rect x="815.5" y="1036" width="22.5" height="20" rx="2" fill="url(#gt)" opacity="0.95"/>
<rect x="815.5" y="1044" width="15" height="12" fill="#bdbdbd"/>
<!-- widgets -->
<rect x="863" y="1036" width="30" height="27.5" rx="2" fill="#0a63b8"/>
<rect x="865.5" y="1038.5" width="11" height="22.5" rx="1" fill="#f4f4f4"/>
<rect x="879" y="1038.5" width="11.5" height="12" rx="0.5" fill="#5ed0ff"/>
<rect x="879" y="1052" width="11.5" height="4" fill="#25a8f5"/><rect x="879" y="1057" width="11.5" height="4" fill="#1591e8"/>
<!-- chat -->
<circle cx="932.5" cy="1049.5" r="14" fill="url(#gc)"/><path d="M921,1058L918,1063.5L928,1062Z" fill="#6a5fc8"/>
<rect x="924" y="1044" width="12.5" height="11.5" rx="2" fill="#fff"/><path d="M937.5,1048.5L942,1045.5V1054L937.5,1051Z" fill="#fff"/>
<!-- folder -->
<path d="M973,1039Q973,1037 975,1037H982.5L985.5,1040H1001.5Q1003.3,1040 1003.3,1042V1063.5H973Z" fill="#f5b61a"/>
<path d="M973,1043Q973,1041.500 974.5,1041.500H983L986,1040H1001.5Q1003.3,1040 1003.3,1042V1063.5H973Z" fill="url(#gf)"/>
<path d="M978,1058.500Q978,1055.700 981,1055.700H995Q998,1055.700 998,1058.500V1063.500H978Z" fill="#1486dc"/><rect x="982" y="1058.600" width="12" height="1.600" rx="0.8" fill="#0b5cad"/>
<!-- chrome -->
<circle cx="1042.700" cy="1049.900" r="13.900" fill="#db4437"/>
<path d="M1042.700,1049.900L1030.660,1056.850A13.900,13.900 0 0 1 1030.660,1042.950Z" fill="#db4437"/>
<path d="M1042.700,1049.900L1030.660,1042.950A13.900,13.900 0 0 0 1040.300,1063.590L1049.650,1047Z" fill="#0f9d58"/>
<path d="M1042.700,1049.900L1040.300,1063.590A13.900,13.900 0 0 0 1055.760,1045.150H1042.700Z" fill="#ffcd40"/>
<path d="M1042.700,1043.700H1055.100A13.900,13.900 0 0 0 1030.660,1042.950L1037.300,1053Z" fill="#db4437"/>
<circle cx="1042.700" cy="1049.900" r="6.300" fill="#f4f4f4"/><circle cx="1042.700" cy="1049.900" r="5" fill="#4c8bf5"/>
<rect x="1038.700" y="1070" width="8.300" height="3.600" rx="1.800" fill="#9d93b5"/>
<!-- store -->
<path d="M1091,1042V1039Q1091,1036.800 1093.200,1036.800H1102.300Q1104.500,1036.800 1104.500,1039V1042" fill="none" stroke="#28a8ea" stroke-width="2"/>
<path d="M1083,1041.500Q1083,1039.800 1084.700,1039.800H1110.300Q1112,1039.800 1112,1041.500V1060Q1112,1064.500 1107.500,1064.500H1087.500Q1083,1064.500 1083,1060Z" fill="url(#gt)"/>
<rect x="1092" y="1046.500" width="5.200" height="5.200" fill="#f25022"/><rect x="1098" y="1046.500" width="5.200" height="5.200" fill="#7fba00"/><rect x="1092" y="1052.500" width="5.200" height="5.200" fill="#00a4ef"/><rect x="1098" y="1052.500" width="5.200" height="5.200" fill="#ffb900"/>
<!-- obs -->
<rect x="1128.500" y="1025.500" width="49" height="49" rx="4" fill="#ffffff" fill-opacity="0.065" stroke="#ffffff" stroke-opacity="0.050"/>
<circle cx="1152.700" cy="1049.700" r="13.200" fill="#1c191f" stroke="#e4e4e8" stroke-width="1.200"/>
<g fill="#c4c4cc"><path d="M1152.600,1050.800Q1146.200,1047.600 1146.900,1040.200Q1147.200,1039.300 1147.700,1040.200Q1148.200,1045.800 1153.400,1049.400Z"/><path d="M1152.400,1049.300Q1155.400,1044.600 1161.700,1046.200Q1164,1047.600 1163.700,1050.800Q1163.300,1051.400 1163,1050.600Q1160.400,1046 1153.600,1050.700Z"/><path d="M1153.700,1049.800Q1155,1056.800 1149,1058.900Q1147.600,1059.100 1147.200,1058.600Q1152.400,1056.200 1152,1050.400Z"/></g>
<rect x="1143" y="1070" width="19.700" height="3.600" rx="1.800" fill="#dba2ec"/>
<!-- steam -->
<circle cx="1207.900" cy="1049.600" r="14" fill="url(#gs)"/>
<path d="M1209.600,1049.200L1204.200,1053.400" stroke="#fff" stroke-width="5.400" fill="none"/>
<path d="M1194,1049.200L1203,1052.400L1201.500,1058L1194.600,1055.200Q1193.700,1052 1194,1049.200Z" fill="#fff"/>
<circle cx="1212.400" cy="1045.900" r="4.800" fill="#1a3c68" stroke="#fff" stroke-width="1.700"/><circle cx="1212.400" cy="1045.900" r="2.700" fill="#fff"/>
<circle cx="1203.600" cy="1054.700" r="3.500" fill="#fff"/><circle cx="1203.600" cy="1054.700" r="2.300" fill="none" stroke="#b8c8da" stroke-width="0.700"/>
<rect x="1204" y="1070" width="8" height="3.600" rx="1.800" fill="#9d93b5"/>
</svg>
<!-- tray -->
<svg class="abs" style="left:1640px;top:0" width="180" height="60" viewBox="1640 1020 180 60">
<path d="M1652,1054L1659.500,1046.500L1667,1054" fill="none" stroke="#fff" stroke-width="1.300"/>
<rect x="1691.700" y="1040.600" width="6.600" height="11.800" rx="3.300" fill="#dba6ec" fill-opacity="0.35" stroke="#dba6ec" stroke-width="1.300"/><path d="M1688.700,1049.500A6.300,6.300 0 0 0 1701.300,1049.500M1695,1055.800V1059.500" fill="none" stroke="#dba6ec" stroke-width="1.300"/>
<g fill="none" stroke="#fff" stroke-width="1.500"><path d="M1725.500,1047.500Q1735,1038.500 1744.500,1047.500"/><path d="M1728.500,1051Q1735,1045 1741.500,1051"/><path d="M1731.500,1054.500Q1735,1051.500 1738.500,1054.500"/></g><circle cx="1735" cy="1057.300" r="1.500" fill="#fff"/>
<path d="M1755.600,1047.500H1758.600L1762.600,1044.300V1056.200L1758.600,1053H1755.600Z" fill="none" stroke="#fff" stroke-width="1.200" stroke-linejoin="round"/><path d="M1765.300,1047.300Q1767.300,1050.250 1765.300,1053.200" fill="none" stroke="#fff" stroke-width="1.200"/><path d="M1768.500,1044.800Q1772,1050.250 1768.500,1055.700" fill="none" stroke="#7d7592" stroke-width="1.200"/><path d="M1771.500,1042.300Q1776.700,1050.250 1771.500,1058.200" fill="none" stroke="#5c5472" stroke-width="1.200"/>
<rect x="1790.600" y="1044.600" width="12.600" height="10.800" rx="2.200" fill="none" stroke="#fff" stroke-width="1.300"/><rect x="1792.200" y="1047.400" width="9.400" height="6.400" rx="0.800" fill="#fff"/><rect x="1803.800" y="1047.800" width="1.800" height="4.400" rx="0.800" fill="#fff"/>
<path d="M1786.300,1041V1043.500M1788.900,1041V1043.500" stroke="#fff" stroke-width="1" fill="none"/><path d="M1785,1043.500H1790.200V1046Q1790.200,1048 1788.300,1048.300V1056H1787V1048.300Q1785,1048 1785,1046Z" fill="#fff"/><path d="M1787.600,1055.400H1792" stroke="#fff" stroke-width="1.200"/>
</svg>
<div class="abs" style="left:1797px;top:11px;width:100px;text-align:right;font-size:14.400px;line-height:18px;color:#fff;transform:scaleY(1.08);transform-origin:50% 80%;letter-spacing:-0.9px">15:21</div>
<div class="abs" style="left:1796px;top:31px;width:100px;text-align:right;font-size:14.400px;line-height:18px;color:#fff;transform:scaleY(1.08);transform-origin:50% 80%">20.02.2022</div>
</div>

</body></html>
